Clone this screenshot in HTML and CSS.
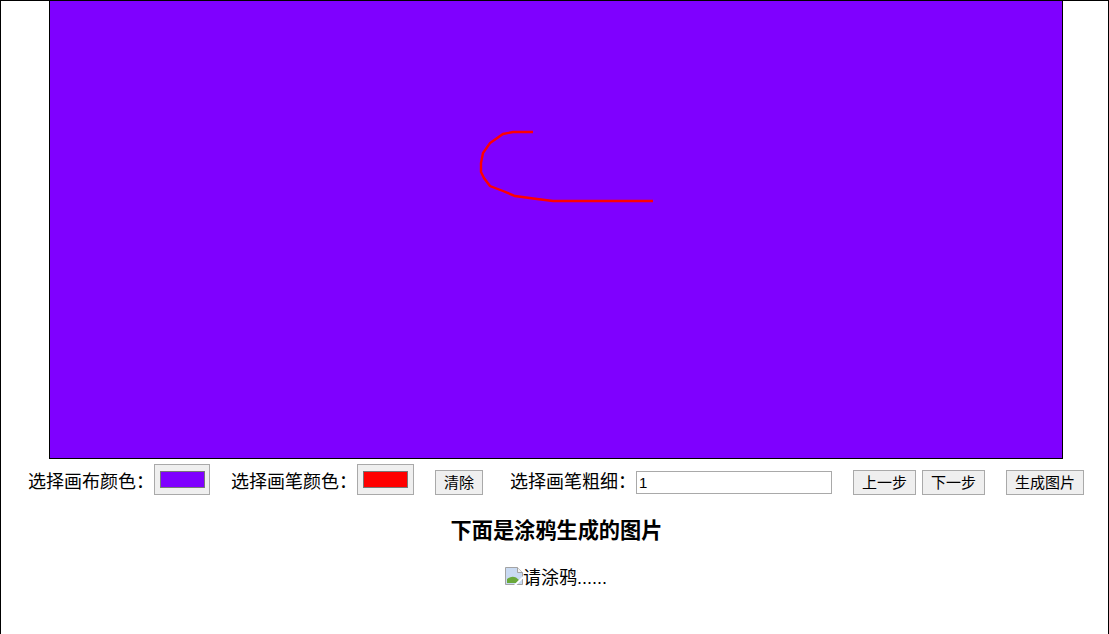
FILE: index.html
```html
<!DOCTYPE html>
<html lang="zh-CN">
  <head>
    <meta charset="UTF-8" />
    <title>涂鸦</title>
    <link rel="stylesheet" href="styles.css">
  </head>
  <body>
    <div class="page">
      <div class="board">
        <svg class="board-line" width="1012" height="457" viewBox="0 0 1012 457" fill="none" stroke="#ff0000" stroke-width="2.4">
          <path d="M483 131 L463 131 L453 133 L440 142 L433 152 L431 162 L431 171 L434 177 L440 185 L453 190 L465 195 L487 198 L503 200 L603 200" />
        </svg>
      </div>

      <div class="tools">
        <label class="tool-label">选择画布颜色：</label>
        <input class="color-pick" type="color" value="#7f00ff" />
        <label class="tool-label label-pen">选择画笔颜色：</label>
        <input class="color-pick color-pen" type="color" value="#ff0000" />
        <button class="tool-btn btn-clear">清除</button>
        <label class="tool-label label-size">选择画笔粗细：</label>
        <input class="size-input" type="text" value="1" />
        <button class="tool-btn btn-prev">上一步</button>
        <button class="tool-btn btn-next">下一步</button>
        <button class="tool-btn btn-make">生成图片</button>
      </div>

      <h3 class="result-title">下面是涂鸦生成的图片</h3>
      <div class="result">
        <svg class="broken-icon" width="18" height="18" viewBox="0 0 18 18">
          <path d="M0.5 0.5H12.5L17.5 5.5V17.5H0.5Z" fill="#c9daf2" stroke="#a3a3a3" />
          <path d="M12.5 0.5V5.5H17.5" fill="#f2f2f2" stroke="#a3a3a3" />
          <path d="M2 16V12C5 9.5 8 9 11 10.5L14 13L11 16Z" fill="#6aa83a" />
          <path d="M9 18L18 9V11.5L11.5 18Z" fill="#fff" />
        </svg>
        <span class="result-text">请涂鸦......</span>
      </div>
    </div>
  </body>
</html>
```

FILE: styles.css
```css
* {
  box-sizing: border-box;
}

html,
body {
  margin: 0;
  padding: 0;
  overflow: hidden;
}

body {
  height: 634px;
  background: #fff;
  color: #000;
  font-family: "Liberation Sans", "Noto Sans CJK SC", sans-serif;
  font-size: 18px;
}

.page {
  height: 660px;
  border: 1px solid #000;
}

.board {
  width: 1014px;
  height: 458px;
  margin-left: 48px;
  background: #7f00ff;
  border: 1px solid #000;
  border-top: 0;
}

.board-line {
  display: block;
}

.tools {
  display: flex;
  align-items: flex-start;
  height: 37px;
  padding: 5px 0 0 27px;
}

.tool-label {
  height: 31px;
  line-height: 36px;
  white-space: nowrap;
}

.color-pick {
  width: 56px;
  height: 31px;
  padding: 6px 4px 6px 5px;
  background: #efefef;
  border: 1px solid #a9a9a9;
  border-radius: 0;
}

.color-pick::-webkit-color-swatch-wrapper {
  padding: 0;
}

.color-pick::-webkit-color-swatch {
  border: 1px solid #777;
}

.color-pen {
  width: 57px;
  padding: 6px 5px;
}

.label-pen {
  margin-left: 21px;
}

.label-size {
  margin-left: 27px;
}

.tool-btn {
  height: 25px;
  margin-top: 6px;
  padding: 0 0 2px;
  background: #efefef;
  border: 1px solid #a9a9a9;
  border-radius: 0;
  color: #000;
  font-family: inherit;
  font-size: 15px;
  white-space: nowrap;
}

.btn-clear {
  width: 48px;
  margin-left: 21px;
}

.size-input {
  width: 196px;
  height: 23px;
  margin-top: 7px;
  padding: 1px 2px;
  background: #fff;
  border: 1px solid #a9a9a9;
  border-radius: 0;
  font-family: inherit;
  font-size: 15px;
}

.btn-prev {
  width: 63px;
  margin-left: 21px;
}

.btn-next {
  width: 63px;
  margin-left: 6px;
}

.btn-make {
  width: 78px;
  margin-left: 21px;
}

.result-title {
  margin: 20px 0 0;
  padding-left: 4px;
  font-size: 21.2px;
  line-height: 29px;
  text-align: center;
}

.result {
  display: flex;
  justify-content: center;
  align-items: center;
  height: 26px;
  margin-top: 20px;
  padding-left: 2px;
  line-height: 26px;
}

.broken-icon {
  display: block;
  margin-top: -4px;
  margin-left: 1px;
}
```
